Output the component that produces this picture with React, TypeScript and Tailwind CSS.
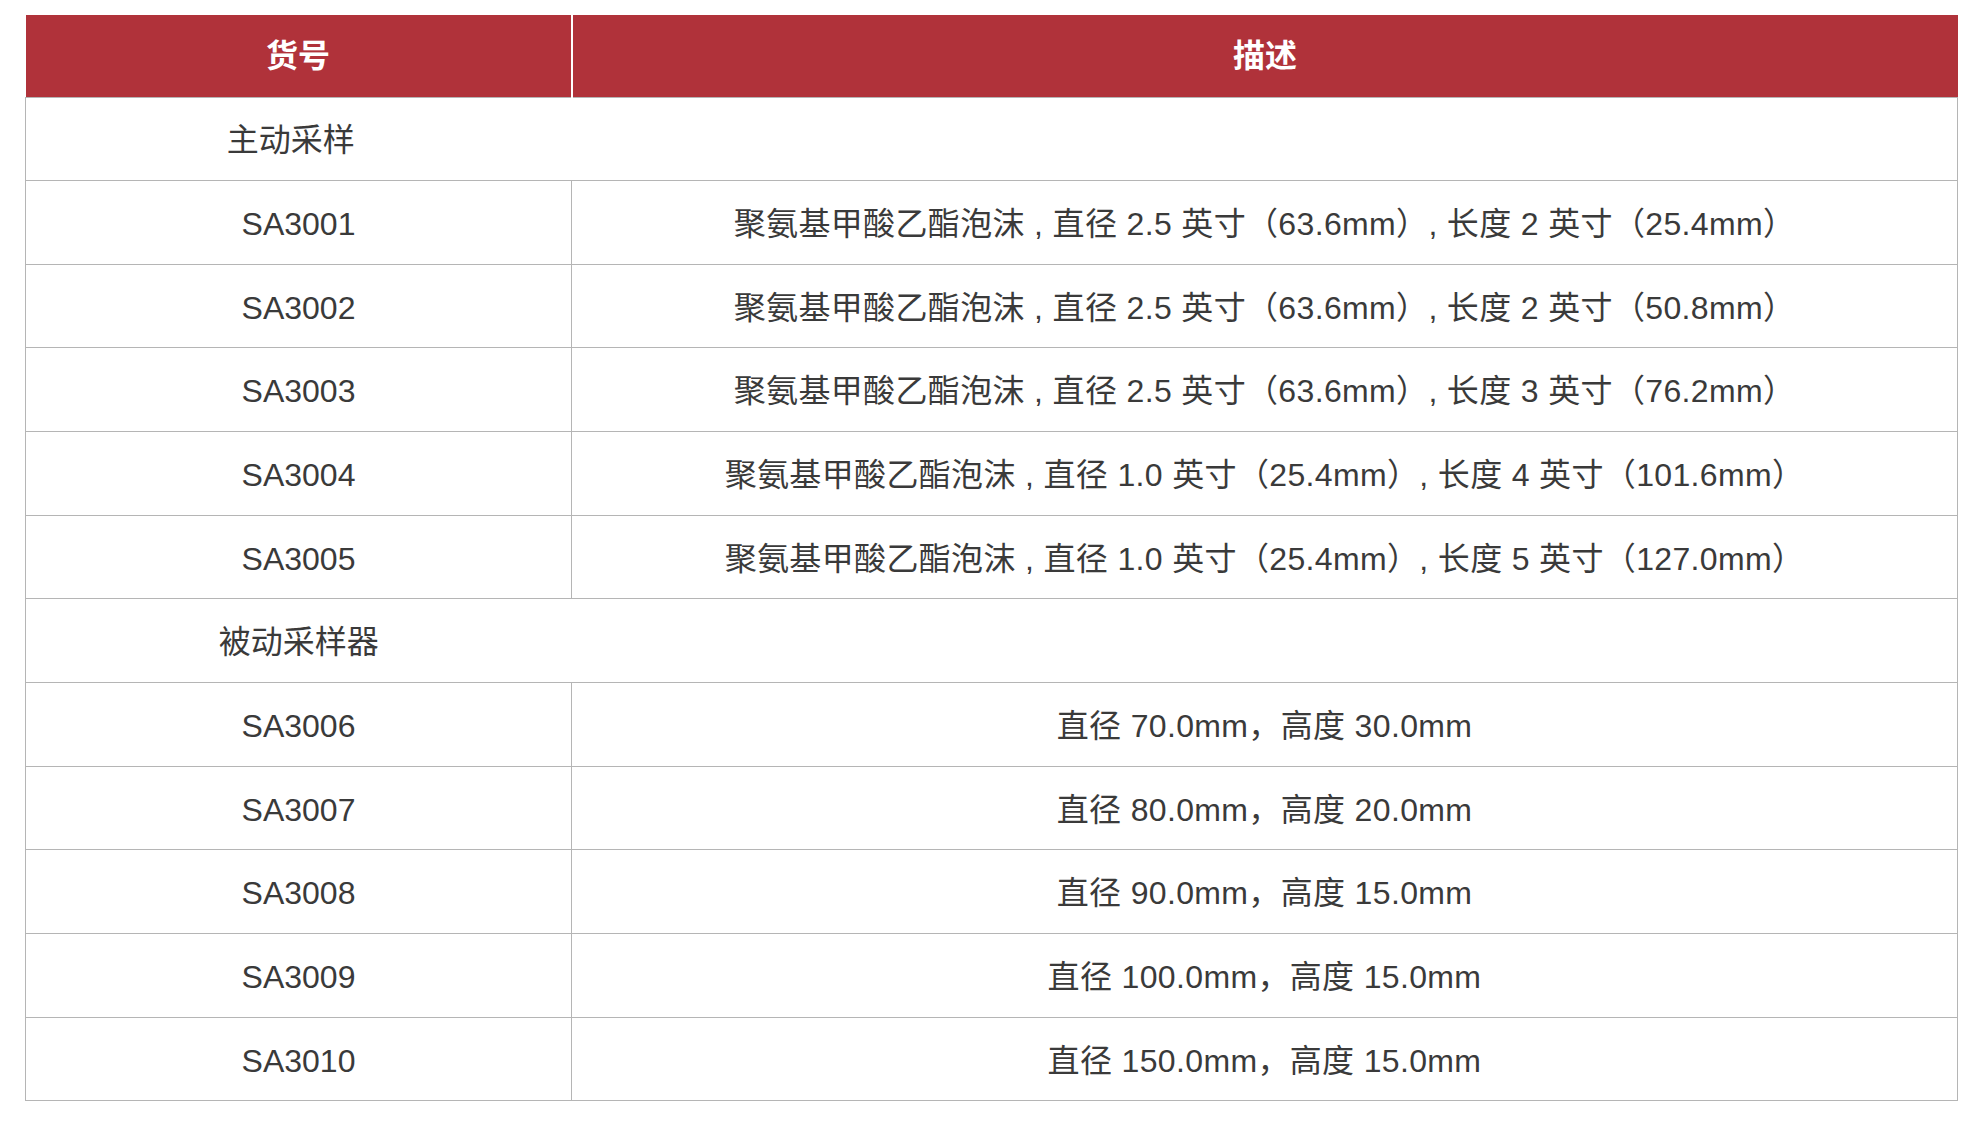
const font = {
  fontFamily: '"Liberation Sans", "Noto Sans CJK SC", sans-serif',
};

type Row =
  | { kind: "group"; label: string; pad?: boolean }
  | { kind: "item"; code: string; desc: string };

const rows: Row[] = [
  { kind: "group", label: "主动采样", pad: true },
  { kind: "item", code: "SA3001", desc: "聚氨基甲酸乙酯泡沫 , 直径 2.5 英寸（63.6mm）, 长度 2 英寸（25.4mm）" },
  { kind: "item", code: "SA3002", desc: "聚氨基甲酸乙酯泡沫 , 直径 2.5 英寸（63.6mm）, 长度 2 英寸（50.8mm）" },
  { kind: "item", code: "SA3003", desc: "聚氨基甲酸乙酯泡沫 , 直径 2.5 英寸（63.6mm）, 长度 3 英寸（76.2mm）" },
  { kind: "item", code: "SA3004", desc: "聚氨基甲酸乙酯泡沫 , 直径 1.0 英寸（25.4mm）, 长度 4 英寸（101.6mm）" },
  { kind: "item", code: "SA3005", desc: "聚氨基甲酸乙酯泡沫 , 直径 1.0 英寸（25.4mm）, 长度 5 英寸（127.0mm）" },
  { kind: "group", label: "被动采样器" },
  { kind: "item", code: "SA3006", desc: "直径 70.0mm，高度 30.0mm" },
  { kind: "item", code: "SA3007", desc: "直径 80.0mm，高度 20.0mm" },
  { kind: "item", code: "SA3008", desc: "直径 90.0mm，高度 15.0mm" },
  { kind: "item", code: "SA3009", desc: "直径 100.0mm，高度 15.0mm" },
  { kind: "item", code: "SA3010", desc: "直径 150.0mm，高度 15.0mm" },
];

export default function App() {
  return (
    <div className="min-h-screen bg-white pt-[15px] pl-[25px]" style={font}>
      <table className="w-[1933px] border-collapse table-fixed text-[32px] text-[#3a3a3a]">
        <colgroup>
          <col className="w-[546px]" />
          <col />
        </colgroup>
        <thead>
          <tr className="h-[82px] bg-[#b0323a] text-white">
            <th className="border-r-2 border-white font-bold">货号</th>
            <th className="font-bold">描述</th>
          </tr>
        </thead>
        <tbody>
          {rows.map((r, i) =>
            r.kind === "group" ? (
              <tr key={i} className="h-[83.67px] border border-[#b5b5b5]">
                <td className={r.pad ? "text-center pt-[3px] pr-[16px]" : "text-center pt-[3px]"}>{r.label}</td>
                <td></td>
              </tr>
            ) : (
              <tr key={i} className="h-[83.67px] border border-[#b5b5b5]">
                <td className="border-r border-[#b5b5b5] text-center pt-[3px]">{r.code}</td>
                <td className="text-center pt-[3px] tracking-[0.35px]">{r.desc}</td>
              </tr>
            )
          )}
        </tbody>
      </table>
    </div>
  );
}
